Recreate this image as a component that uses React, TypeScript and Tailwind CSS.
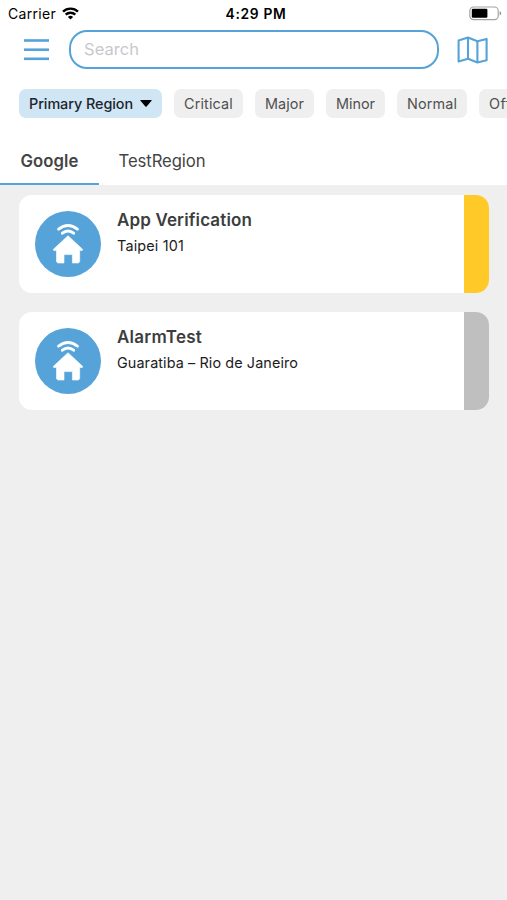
import { useState } from 'react'

const filters = [
  { label: 'Critical', width: 'w-[69px]' },
  { label: 'Major', width: 'w-[59px]' },
  { label: 'Minor', width: 'w-[59px]' },
  { label: 'Normal', width: 'w-[70px]' },
  { label: 'Offline', width: 'w-[68px]' },
]

const tabs = [
  { label: 'Google', width: 'w-[99px]', text: 'w-[58px]' },
  { label: 'TestRegion', width: 'w-[126px]', text: 'w-[87px]' },
]

const sites = [
  { name: 'App Verification', nameWidth: 135, place: 'Taipei 101', placeWidth: 67, status: 'bg-[#ffca28]' },
  { name: 'AlarmTest', nameWidth: 85, place: 'Guaratiba – Rio de Janeiro', placeWidth: 181, status: 'bg-[#bfbfbf]' },
]

// Text set to an exact width
function Fit({ text, width, size, weight = 400 }: { text: string; width: number; size: number; weight?: number }) {
  const [spacing, setSpacing] = useState(0)

  const measure = (el: HTMLSpanElement | null) => {
    if (!el || spacing !== 0) return
    const gap = (width - el.getBoundingClientRect().width) / text.length
    if (Math.abs(gap) > 0.01) setSpacing(gap)
  }

  return (
    <span
      ref={measure}
      className="inline-block whitespace-nowrap"
      style={{ fontSize: size, fontWeight: weight, letterSpacing: spacing }}
    >
      {text}
    </span>
  )
}

function WifiIcon() {
  return (
    <svg className="h-[13px] w-[17px]" viewBox="0 0 17 13" fill="none" stroke="#000" strokeWidth="2.4">
      <path d="M1 4.7a10.6 10.6 0 0 1 15 0" />
      <path d="M3.7 7.7a6.8 6.8 0 0 1 9.6 0" />
      <path d="M8.5 12.6 5.9 9.9a3.8 3.8 0 0 1 5.2 0Z" fill="#000" stroke="none" />
    </svg>
  )
}

function BatteryIcon() {
  return (
    <svg className="h-[15px] w-[33px]" viewBox="0 0 33 15" fill="none">
      <rect x=".8" y="1" width="28.4" height="12.6" rx="3.8" stroke="#a3a3a3" strokeWidth="1.2" />
      <rect x="2.8" y="2.8" width="15.6" height="9" rx="1.2" fill="#000" />
      <path d="M30.7 5.2c2 .7 2 3.5 0 4.2Z" fill="#8f8f8f" />
    </svg>
  )
}

function MenuIcon() {
  return (
    <svg className="h-[23px] w-[25px]" viewBox="0 0 25 23" fill="#55a3d9">
      <rect y="1.2" width="25" height="2.6" />
      <rect y="10.4" width="25" height="2.6" />
      <rect y="19.5" width="25" height="2.6" />
    </svg>
  )
}

function MapIcon() {
  return (
    <svg className="h-[28px] w-[31px]" viewBox="0 0 31 28" fill="none" stroke="#55a3d9" strokeWidth="2.1" strokeLinejoin="round">
      <path d="M1.6 4.4 11 1.5l9.4 3.7L29.6 2.9v21.3l-9.2 2.3L11 22.8l-9.4 2.7Z" />
      <path d="M11 1.5v21.3M20.4 5.2v21.3" />
    </svg>
  )
}

function HomeIcon() {
  return (
    <svg className="size-[66px] shrink-0" viewBox="0 0 66 66" fill="none">
      <circle cx="33" cy="33" r="33" fill="#55a3d9" />
      <path d="M23.6 18.1Q33 11 42.4 18.1" stroke="#fff" strokeWidth="3" strokeLinecap="round" />
      <path d="M27.4 22.2Q33 17.7 38.6 22.2" stroke="#fff" strokeWidth="3" strokeLinecap="round" />
      <path
        d="M33 24.7 47.6 38.3Q48 39.5 46.8 39.5H44.7V50.8L43.4 52H37.4V43.6H29V52H22.8L21.5 50.8V39.5H19.2Q18 39.5 18.4 38.3Z"
        fill="#fff"
        stroke="#fff"
        strokeWidth=".6"
        strokeLinejoin="round"
      />
    </svg>
  )
}

export default function App() {
  const [active, setActive] = useState('Google')

  return (
    <div className="flex h-[900px] w-[507px] flex-col overflow-hidden bg-[#efefef] font-['Inter','Liberation_Sans',sans-serif]">
      <header className="h-[185px] shrink-0 bg-white">
        {/* Status bar */}
        <div className="grid h-[26px] grid-cols-[1fr_auto_1fr] items-center pr-[5px] pl-2 leading-[26px] text-black">
          <div className="flex items-center gap-[6px]">
            <Fit text="Carrier" width={48} size={14} />
            <WifiIcon />
          </div>
          <div className="pl-[2px]">
            <Fit text="4:29 PM" width={61} size={13.8} weight={600} />
          </div>
          <div className="flex justify-end">
            <BatteryIcon />
          </div>
        </div>

        <div className="mt-1 flex h-[39px] items-center pr-[19px] pl-6">
          <button aria-label="Menu">
            <MenuIcon />
          </button>
          <div className="ml-5 flex h-[39px] w-[370px] items-center rounded-[18px] border-[2.5px] border-[#55a3d9] pl-[13px] text-[#c8c8cd]">
            <Fit text="Search" width={55} size={16.5} />
          </div>
          <button className="ml-[18px]" aria-label="Map">
            <MapIcon />
          </button>
        </div>

        <div className="mt-5 flex gap-3 overflow-hidden pl-[19px] leading-[29px] text-[#505050]">
          <button className="flex h-[29px] w-[143px] shrink-0 items-center rounded-[7px] bg-[#d0e6f4] pl-[10px] text-[#1b252c]">
            <Fit text="Primary Region" width={104} size={14.4} weight={500} />
            <svg className="ml-[7px] h-[7px] w-3" viewBox="0 0 12 7">
              <path d="M.8 0h10.4q.9 0 .3.8L6.6 6.5q-.6.6-1.2 0L.5.8Q-.1 0 .8 0Z" fill="#000" />
            </svg>
          </button>
          {filters.map((filter) => (
            <button
              key={filter.label}
              className={`h-[29px] shrink-0 rounded-[7px] bg-[#efefef] pl-[10px] text-left ${filter.width}`}
            >
              <Fit text={filter.label} width={parseInt(filter.width.slice(3)) - 20} size={14.4} />
            </button>
          ))}
        </div>

        <nav className="mt-[18px] flex h-[49px] text-[#444]">
          {tabs.map((tab) => (
            <button
              key={tab.label}
              onClick={() => setActive(tab.label)}
              className={`flex h-[49px] items-center justify-center border-b-[2.5px] pt-1 ${tab.width} ${
                active === tab.label ? 'border-[#55a3d9]' : 'border-transparent'
              }`}
            >
              <Fit text={tab.label} width={parseInt(tab.text.slice(3))} size={16.7} weight={active === tab.label ? 600 : 400} />
            </button>
          ))}
        </nav>
      </header>

      <main className="flex flex-col gap-[19px] px-[19px] pt-[10px]">
        {sites.map((site) => (
          <article key={site.name} className="flex h-[98px] w-[470px] overflow-hidden rounded-[13px] bg-white">
            <div className="flex flex-1 items-start pt-4 pl-4">
              <HomeIcon />
              <div className="ml-4">
                <h2 className="h-[20px] leading-[19px] text-[#3d3d3d]">
                  <Fit text={site.name} width={site.nameWidth} size={17} weight={600} />
                </h2>
                <p className="mt-[4px] leading-[20px] text-[#1c1c1c]">
                  <Fit text={site.place} width={site.placeWidth} size={14.4} />
                </p>
              </div>
            </div>
            <div className={`w-[25px] shrink-0 ${site.status}`} />
          </article>
        ))}
      </main>
    </div>
  )
}
